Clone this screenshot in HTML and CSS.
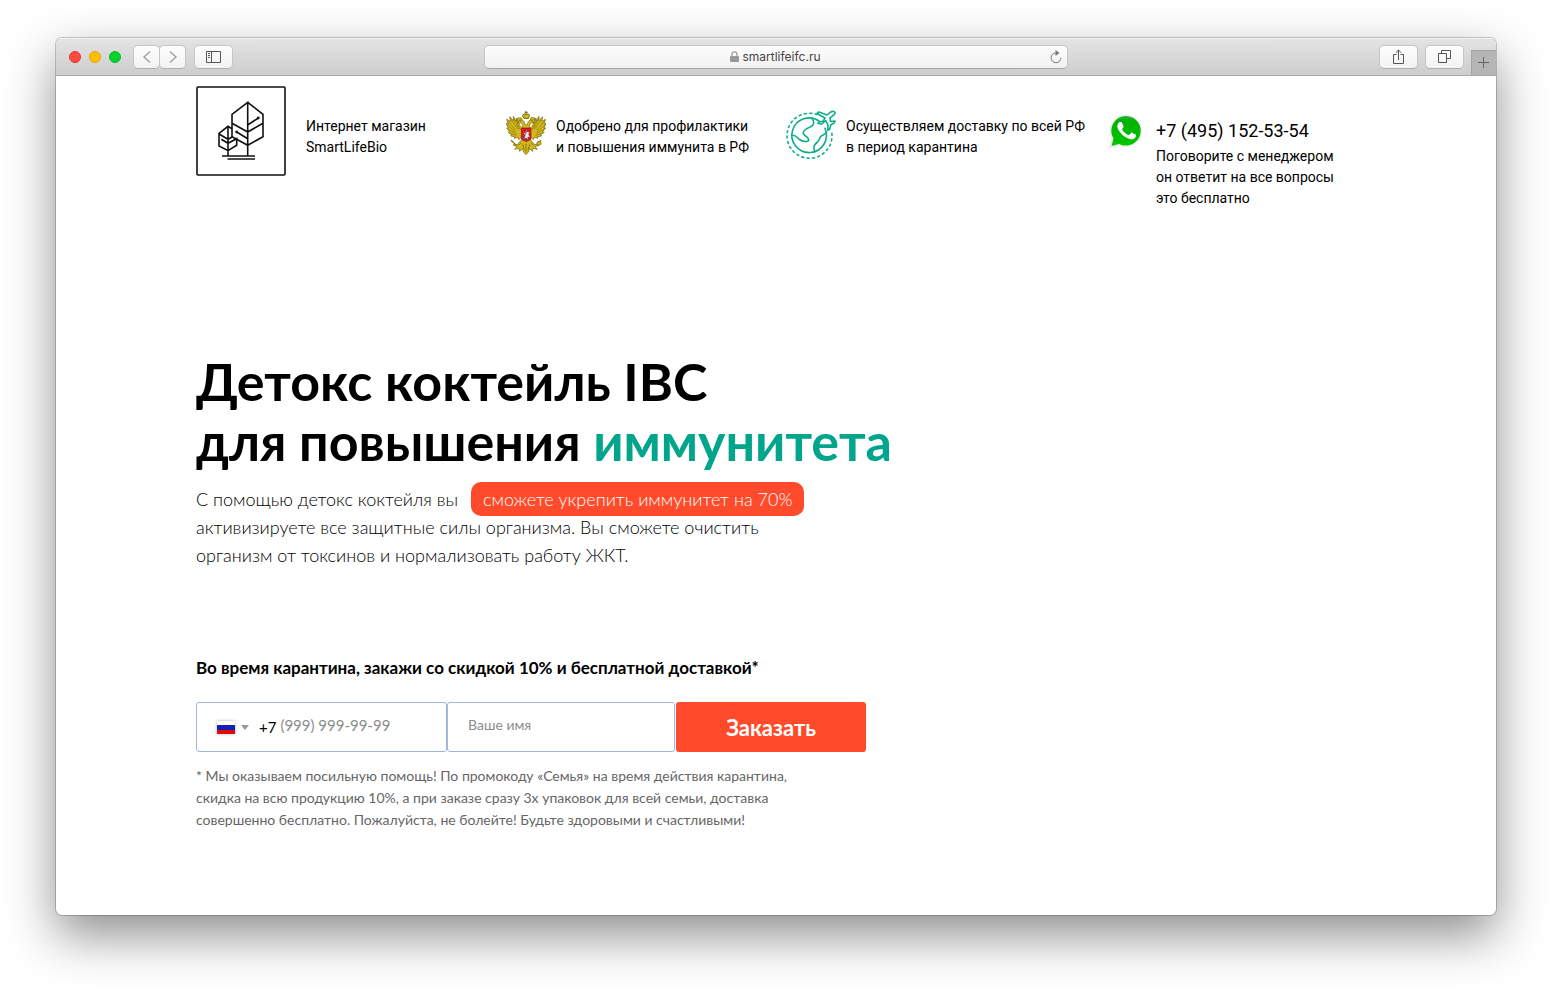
FILE: index.html
```html
<!DOCTYPE html>
<html lang="ru">
  <head>
    <meta charset="UTF-8" />
    <meta name="viewport" content="width=device-width, initial-scale=1.0" />
    <title>Детокс коктейль IBC</title>
    <link rel="stylesheet" href="styles.css">
  </head>
  <body>
    <div class="window">
      <div class="toolbar">
        <div class="toolbar-left">
          <div class="lights">
            <span class="light red"></span>
            <span class="light yellow"></span>
            <span class="light green"></span>
          </div>
          <div class="nav-buttons">
            <button class="tool nav" aria-label="Назад">
              <svg width="10" height="14" viewBox="0 0 10 14"><path d="M8 1.500 2 7l6 5.500" fill="none" stroke="#a3a3a3" stroke-width="1.500" /></svg>
            </button>
            <button class="tool nav" aria-label="Вперёд">
              <svg width="10" height="14" viewBox="0 0 10 14"><path d="m2 1.500 6 5.500-6 5.500" fill="none" stroke="#a3a3a3" stroke-width="1.500" /></svg>
            </button>
          </div>
          <button class="tool" aria-label="Боковая панель">
            <svg width="15" height="12" viewBox="0 0 15 12" fill="none" stroke="#555">
              <path d="M.5.5h14v11H.5zM5.500.5v11" />
              <path d="M2 2.500h2M2 4.500h2M2 6.500h2" />
            </svg>
          </button>
        </div>

        <div class="address">
          <svg width="9" height="12" viewBox="0 0 9 12">
            <path d="M2 5.500V3.300a2.500 2.500 0 0 1 5 0v2.200" fill="none" stroke="#999" stroke-width="1.200" />
            <rect y="5" width="9" height="6" rx="1" fill="#999" />
          </svg>
          <input class="address-input" type="text" value="smartlifeifc.ru" aria-label="Адрес" />
          <button class="reload" aria-label="Обновить">
            <svg width="12" height="14" viewBox="0 0 12 14">
              <path d="M6.500 3A4.900 4.900 0 1 0 10.900 7.800" fill="none" stroke="#777" />
              <path d="M5.500 0 9.500 3 5.500 6z" fill="#777" />
            </svg>
          </button>
        </div>

        <div class="toolbar-right">
          <button class="tool" aria-label="Поделиться">
            <svg width="13" height="16" viewBox="0 0 13 16" fill="none" stroke="#555">
              <path d="M4.500 5.500h-3v9h10v-9h-3M6.500 11V1M3.800 3.700 6.500 1l2.700 2.700" />
            </svg>
          </button>
          <button class="tool" aria-label="Вкладки">
            <svg width="13" height="13" viewBox="0 0 13 13" fill="none" stroke="#555">
              <path d="M.5 3.500h8v9h-8zM3.500 3.500v-3h9v8h-4" />
            </svg>
          </button>
          <button class="new-tab" aria-label="Новая вкладка">
            <svg width="11" height="11" viewBox="0 0 11 11"><path d="M5.500 0v11M0 5.500h11" stroke="#666" /></svg>
          </button>
        </div>
      </div>

      <div class="page">
        <header class="header">
          <div class="info">
            <svg class="logo" width="90" height="90" viewBox="0 0 90 90" fill="none" stroke="#111" stroke-width="1.600">
              <rect x="1" y="1" width="88" height="88" rx="1" />
              <!-- большое дерево -->
              <path d="M51.700 70V16.300L36 28.300v22.400l15.700 8.600L67 50.700V28.300L51.700 16.300M36 37.300 51.700 46 67 37.300M51.700 39l10.600-7M51.700 52.700 40.700 46" />
              <!-- маленькое дерево -->
              <path d="M36 42.700l-4-2.400-9 7V60l9 4.700 8.700-5.400v-6.600L32 57.300l-6.700-4M23 48l9 5.300 4.500-2.600M32 40.300V70" />
              <path d="M26 70h33M31.500 73H59" />
              <circle cx="62.300" cy="32" r="0.600" />
              <circle cx="40.700" cy="46" r="0.600" />
            </svg>
            <p>Интернет магазин<br />SmartLifeBio</p>
          </div>

          <div class="info">
            <svg class="info-icon" width="40" height="45" viewBox="0 0 120 135" stroke="#6f6200" stroke-width="2">
              <!-- крылья -->
              <g fill="#d2b820">
                <path id="wing" d="M50 56C44 52 40 46 38 38l-7-14-1 10-8-15 0 13-11-12 3 14L2 28l5 13-7-1 7 13-5 1 9 11-5 2 11 7-3 4 12 2-1 5 11-3 3 7 10-11z" />
                <use href="#wing" transform="matrix(-1 0 0 1 121 0)" />
              </g>
              <g id="feathers" stroke="#8c7900" stroke-width="2" fill="none">
                <path d="M13 25 34 56M4 32l25 28M3 44l26 22M5 57l25 14M11 70l22 6M23 25l15 32M31 30l12 30" />
              </g>
              <use href="#feathers" transform="matrix(-1 0 0 1 121 0)" />
              <!-- тело, хвост и лапы -->
              <g fill="#d2b820">
                <path d="M48 88 35 103l-14 2 12 5-7 8 13-3 2 9 8-8 4 10 7 8 7-8 4-10 8 8 2-9 13 3-7-8 12-5-14-2-13-15z" />
                <path d="M46 57c6-8 5-14-1-18l-11-1 7-7c9-3 15 2 16 13h7c1-11 7-16 16-13l7 7-11 1c-6 4-7 10-1 18z" />
                <path d="m15 91 16 15M105 91l-13 12" stroke="#8c7900" stroke-width="4" />
                <circle cx="99" cy="100" r="6" />
                <!-- короны -->
                <path d="M51 20c-4-7 3-9 9-7 7-2 13 0 9 7l-2 5H54zM60 13V3M56 7h9" stroke-width="3" />
                <path d="M36 31c-5-5 0-9 5-7 5-2 9 2 5 6zM75 30c-5-5 0-9 5-7 5-2 9 2 5 7z" />
              </g>
              <path d="M42 34h2M78 34h2M50 103l5 17M60 101v26M71 103l-5 17M37 107l8-8M83 107l-8-8" />
              <!-- щит -->
              <path d="M46 54h29v31c0 6-9 6-14.500 10C55 91 46 91 46 85z" fill="#d81e16" stroke="#8e1713" />
              <path d="m52 87 6-9-4-9 5 1 1-9 4 5 6 1-3 6 4 7-7 1 3 7-8-5z" fill="#dce9ef" stroke="none" />
              <path d="m64 60-12 27M50 80l6 8h13" stroke="#305f92" fill="none" />
            </svg>
            <p>Одобрено для профилактики<br />и повышения иммунита в РФ</p>
          </div>

          <div class="info wide">
            <svg class="info-icon" width="50" height="50" viewBox="0 0 50 50" fill="none" stroke="#10ad8b" stroke-width="1.600" stroke-linejoin="round" stroke-linecap="round">
              <path d="M31 4.500A22.500 22.500 0 1 0 45.500 21" stroke-dasharray="2 3.400" />
              <path d="M33.500 11.400A17.300 17.300 0 1 0 39 18.300" />
              <path d="M26 8.500c2.500 3 2 6 0 7.500-2.700 1.700-8 3-8.800 6.400-.7 3.500 6.300 4 5.500 8.300-2 1.500-6.500.7-9.200-1.200-2.500-1.800-3-4-6.800-4.200" />
              <path d="M40.600 22.500c-1.500 2.400-4.500 2-6.300 4.500-1.300 2-.8 3.800-3.300 5.500-3.400 2.600-4.200 5.500-2.200 9.200" />
              <!-- самолёт -->
              <path d="M31 3.500 33 2l8 3 3.500-2.800c2-1.400 5.300-.8 4.500 1.300-.3.900-1.800 1.800-5 4.400l.6 3.600 4.600-.5-1 2-3.400 1.700-1 4.300-2 1.300.2-5.300-2.300-4.300-4 3.300-3.700-.6 1.500-1.600 3.500-.5 2-3.300z" fill="#fff" />
            </svg>
            <p>Осуществляем доставку по всей РФ<br />в период карантина</p>
          </div>

          <div class="info contact">
            <svg class="whatsapp" width="36" height="36" viewBox="0 0 36 36">
              <defs>
                <linearGradient id="wa" x1="0" y1="0" x2="0" y2="1">
                  <stop offset="0" stop-color="#20b038" />
                  <stop offset="0.200" stop-color="#00b300" />
                  <stop offset="1" stop-color="#00c700" />
                </linearGradient>
              </defs>
              <path d="M18 2.500A15.300 15.300 0 1 1 11 31.500L2 34l2.500-8.500A15.300 15.300 0 0 1 18 2.500z" fill="#fff" stroke="#eee" stroke-width="2" />
              <path d="M18 3A14.800 14.800 0 1 1 11 30.900L3.500 33l2-7.500A14.800 14.800 0 0 1 18 3z" fill="url(#wa)" />
              <path transform="translate(0 -1) scale(1.550)" fill="#fff" d="M17.472 14.382c-.297-.149-1.758-.867-2.030-.967-.273-.099-.471-.148-.670.150-.197.297-.767.966-.940 1.164-.173.199-.347.223-.644.075-.297-.150-1.255-.463-2.390-1.475-.883-.788-1.480-1.761-1.653-2.059-.173-.297-.018-.458.130-.606.134-.133.298-.347.446-.520.149-.174.198-.298.298-.497.099-.198.050-.371-.025-.520-.075-.149-.669-1.612-.916-2.207-.242-.579-.487-.500-.669-.510-.173-.008-.371-.010-.570-.010-.198 0-.520.074-.792.372-.272.297-1.040 1.016-1.040 2.479 0 1.462 1.065 2.875 1.213 3.074.149.198 2.096 3.200 5.077 4.487.709.306 1.262.489 1.694.625.712.227 1.360.195 1.871.118.571-.085 1.758-.719 2.006-1.413.248-.694.248-1.289.173-1.413-.074-.124-.272-.198-.570-.347z" />
            </svg>
            <div>
              <a class="phone" href="tel:+74951525354">+7 (495) 152-53-54</a>
              <p>Поговорите с менеджером<br />он ответит на все вопросы<br />это бесплатно</p>
            </div>
          </div>
        </header>

        <main class="hero">
          <h1>Детокс коктейль IBC<br />для повышения <span class="accent">иммунитета</span></h1>
          <p class="lead">С помощью детокс коктейля вы <mark>сможете укрепить иммунитет на 70%</mark><br />активизируете все защитные силы организма. Вы сможете очистить<br />организм от токсинов и нормализовать работу ЖКТ.</p>

          <h2>Во время карантина, закажи со скидкой 10% и бесплатной доставкой*</h2>
          <form class="order">
            <div class="field phone-field">
              <button class="country" type="button" aria-label="Код страны">
                <svg class="flag" width="18" height="13" viewBox="0 0 18 13">
                  <rect width="18" height="13" fill="#fff" />
                  <rect y="4" width="18" height="5" fill="#1521b5" />
                  <rect y="9" width="18" height="4" fill="#dd0b0b" />
                </svg>
                <svg width="8" height="5" viewBox="0 0 8 5"><path d="M0 0h8L4 5z" fill="#999" /></svg>
              </button>
              <label class="code" for="phone">+7</label>
              <input id="phone" type="tel" placeholder="(999) 999-99-99" />
            </div>
            <input class="field name-field" type="text" placeholder="Ваше имя" aria-label="Ваше имя" />
            <button class="submit" type="submit">Заказать</button>
          </form>
          <p class="note">* Мы оказываем посильную помощь! По промокоду «Семья» на время действия карантина,<br />скидка на всю продукцию 10%, а при заказе сразу 3х упаковок для всей семьи, доставка<br />совершенно бесплатно. Пожалуйста, не болейте! Будьте здоровыми и счастливыми!</p>
        </main>
      </div>
    </div>
  </body>
</html>
```
FILE: styles.css
```css
* {
  box-sizing: border-box;
}
body {
  margin: 0;
  padding: 38px 56px 74px;
  min-height: 100vh;
  display: flex;
  background: #fff;
  color: #000;
  font-family: Lato, "Open Sans", sans-serif;
}
h1,
h2,
p {
  margin: 0;
}
button,
input {
  font-family: inherit;
  border: none;
  padding: 0;
  margin: 0;
}
button {
  cursor: pointer;
}
svg {
  flex-shrink: 0;
}

/* окно браузера */
.window {
  flex: 1;
  min-width: 0;
  background: #fff;
  border-radius: 6px;
  overflow: hidden;
  box-shadow: 0 0 0 1px rgba(0, 0, 0, 0.2), 0 20px 50px rgba(0, 0, 0, 0.45);
}
.toolbar {
  display: grid;
  grid-template-columns: 1fr minmax(200px, 584px) 1fr;
  align-items: center;
  height: 38px;
  background: linear-gradient(#e4e4e4, #cdcdcd);
  border-bottom: 1px solid #a9a9a9;
  box-shadow: inset 0 1px #f4f4f4;
}
.toolbar-left,
.toolbar-right,
.lights,
.nav-buttons {
  display: flex;
  align-items: center;
}
.toolbar-left {
  padding-left: 13px;
}
.toolbar-right {
  align-self: stretch;
  justify-content: flex-end;
  gap: 7px;
}
.lights {
  gap: 8px;
  margin-right: 12px;
}
.light {
  width: 12px;
  height: 12px;
  border-radius: 50%;
}
.red {
  background: #ff4b42;
  border: 1px solid #e8322c;
}
.yellow {
  background: #ffbf00;
  border: 1px solid #e6a600;
}
.green {
  background: #09d22c;
  border: 1px solid #08b824;
}
.nav-buttons {
  margin-right: 8px;
}
.tool {
  display: flex;
  align-items: center;
  justify-content: center;
  width: 39px;
  height: 24px;
  background: linear-gradient(#fefefe, #f2f2f2);
  border: 1px solid #c6c6c6;
  border-bottom-color: #b0b0b0;
  border-radius: 5px;
}
.nav {
  width: 27px;
}
.nav + .nav {
  margin-left: -1px;
}
.address {
  position: relative;
  display: flex;
  align-items: center;
  justify-content: center;
  gap: 4px;
  height: 24px;
  background: linear-gradient(#fdfdfd, #f1f1f1);
  border: 1px solid #c6c6c6;
  border-bottom-color: #a6a6a6;
  border-radius: 5px;
}
.address-input {
  width: 80px;
  background: none;
  font-family: Inter, sans-serif;
  font-size: 12px;
  color: #444;
}
.reload {
  position: absolute;
  right: 5px;
  height: 14px;
  background: none;
}
.new-tab {
  display: flex;
  align-items: center;
  justify-content: center;
  align-self: flex-end;
  width: 25px;
  height: 25px;
  background: #b5b5b5;
  box-shadow: inset 1px 1px #a5a5a5;
}

/* шапка */
.page {
  max-width: 1200px;
  margin: 0 auto;
  padding: 10px 20px 0;
}
.header {
  display: grid;
  grid-template-columns: 310fr 280fr 325fr 245fr;
  min-height: 122px;
  font-family: Roboto, sans-serif;
  font-size: 14px;
  line-height: 21px;
  white-space: nowrap;
}
.info {
  display: flex;
  align-items: flex-start;
  gap: 10px;
}
.info p {
  padding-top: 30px;
}
.logo {
  margin-right: 10px;
}
.info-icon {
  margin-top: 24px;
}
.whatsapp {
  margin: 27px 0 0 -3px;
}
.contact {
  gap: 12px;
}
.contact p {
  padding-top: 0;
}
.phone {
  display: block;
  padding-top: 30px;
  font-size: 18px;
  line-height: 30px;
  color: #000;
  text-decoration: none;
}

/* первый экран */
.hero {
  padding: 142px 0 80px;
}
h1 {
  font-size: 52px;
  line-height: 60px;
  font-weight: 700;
}
.accent {
  color: #00a58b;
}
.lead {
  margin-top: 14px;
  font-size: 18px;
  line-height: 28px;
  font-weight: 300;
}
mark {
  margin-left: 8px;
  padding: 6px 12px;
  background: #ff4b2b;
  border-radius: 10px;
  color: #fff;
}
h2 {
  margin-top: 85px;
  font-size: 17px;
  line-height: 28px;
  font-weight: 700;
}
.order {
  display: grid;
  grid-template-columns: 251fr 228fr 191fr;
  max-width: 670px;
  margin-top: 20px;
}
.field {
  min-width: 0;
  height: 50px;
  border: 1px solid #9fb7dc;
  border-radius: 3px;
  background: #fff;
}
.field::placeholder,
.field input::placeholder {
  color: #8c8c8c;
}
.phone-field {
  display: flex;
  align-items: center;
  padding-left: 20px;
}
.phone-field,
.phone-field input {
  font-size: 15px;
}
.phone-field input {
  flex: 1;
  min-width: 0;
  padding-bottom: 5px;
}
.country {
  display: flex;
  align-items: center;
  gap: 6px;
  background: none;
}
.flag {
  box-shadow: 0 0 3px rgba(0, 0, 0, 0.3);
}
.code {
  margin: 0 4px 0 10px;
}
.name-field {
  padding: 0 20px 5px;
  font-size: 14px;
}
.submit {
  margin-left: 1px;
  background: #ff4b2b;
  border-radius: 3px;
  color: #fff;
  font-size: 22px;
  font-weight: 700;
}
.note {
  margin-top: 13px;
  font-size: 14px;
  line-height: 22px;
  color: #666;
}
```
